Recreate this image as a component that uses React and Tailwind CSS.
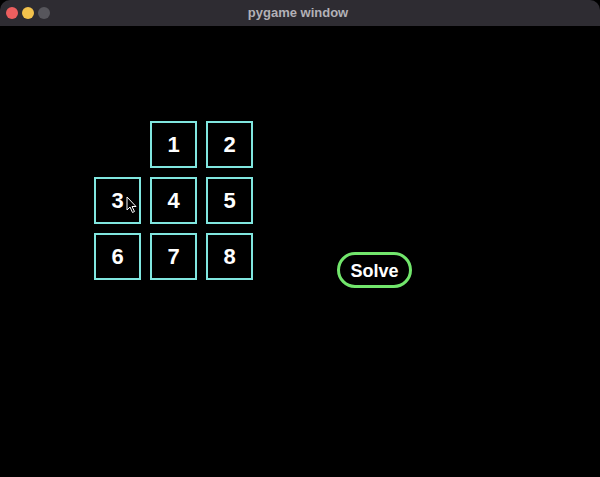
export default function App() {
  const tiles = [null, 1, 2, 3, 4, 5, 6, 7, 8]

  return (
    <div className="w-[600px] h-[477px] bg-black overflow-hidden flex flex-col font-['Liberation_Sans',Arial,sans-serif]">
      {/* macOS title bar */}
      <div className="h-[26px] shrink-0 bg-[#2e2c32] rounded-t-[10px] flex items-center px-[6px] relative">
        <div className="flex gap-[4px]">
          <span className="w-[12px] h-[12px] rounded-full bg-[#ec5f5f]" />
          <span className="w-[12px] h-[12px] rounded-full bg-[#f3c24c]" />
          <span className="w-[12px] h-[12px] rounded-full bg-[#57565c]" />
        </div>
        <span className="flex-1 text-center text-[13px] font-bold text-[#b3b1b7] pr-[48px]">pygame window</span>
      </div>

      {/* game surface */}
      <div className="flex items-start pl-[94px] pt-[95px]">
        <div className="grid grid-cols-[repeat(3,47px)] gap-[9px]">
          {tiles.map((t, i) =>
            t === null ? (
              <div key={i} className="w-[47px] h-[47px]" />
            ) : (
              <div
                key={i}
                className="relative w-[47px] h-[47px] border-2 border-[#80e6df] flex items-center justify-center text-white text-[22px] font-bold"
              >
                {t}
                {t === 3 && (
                  <svg className="absolute left-[30px] top-[17px]" width="12" height="18" viewBox="0 0 12 18">
                    <path d="M1 1 L1 14 L4 11 L6.5 16.5 L8.5 15.5 L6 10.5 L10 10.5 Z" fill="black" stroke="white" strokeWidth="1" strokeLinejoin="round" />
                  </svg>
                )}
              </div>
            )
          )}
        </div>
        <button className="ml-[84px] mt-[131px] w-[75px] h-[36px] rounded-full border-[3px] border-[#72e66c] text-white text-[18px] font-bold flex items-center justify-center pt-[2px]">
          Solve
        </button>
      </div>
    </div>
  )
}
